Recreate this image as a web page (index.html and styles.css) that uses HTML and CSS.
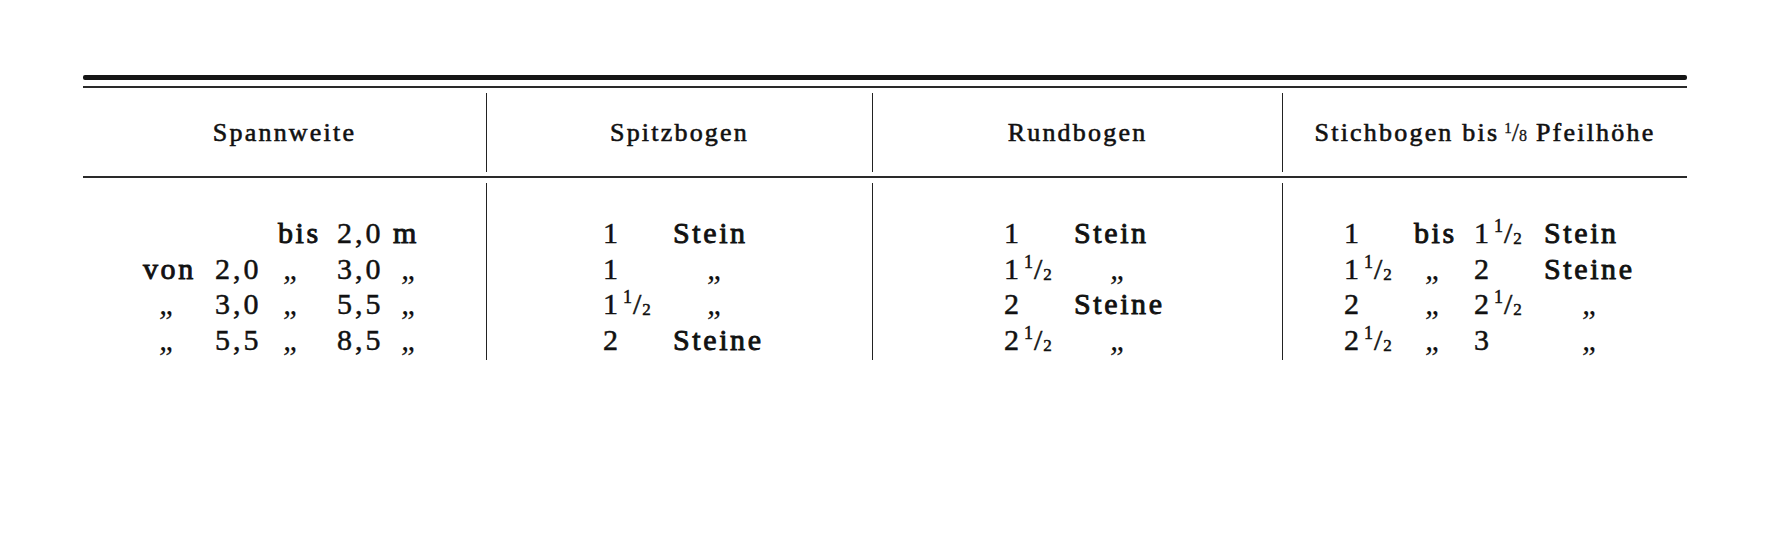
FILE: index.html
```html
<!DOCTYPE html>
<html lang="de">
<head>
<meta charset="utf-8">
<title>Spannweite – Bogenstärken</title>
<link rel="stylesheet" href="styles.css">
</head>
<body>
<div class="page">
  <div class="rule-thick"></div>
  <div class="rule-thin"></div>
  <div class="head">
    <div class="hcell">Spannweite</div>
    <div class="hcell sep">Spitzbogen</div>
    <div class="hcell sep">Rundbogen</div>
    <div class="hcell sep">Stichbogen bis <span class="hfrac"><span class="hsup">1</span>/<span class="hsub">8</span></span> Pfeilhöhe</div>
  </div>
  <div class="rule-mid"></div>
  <div class="body">
    <div class="bcell c1">
      <span></span><span></span><span class="w">bis</span><span>2,0</span><span class="w">m</span>
      <span class="w">von</span><span>2,0</span><span><i class="ditto d-c">„</i></span><span>3,0</span><span><i class="ditto d-e">„</i></span>
      <span><i class="ditto d-a">„</i></span><span>3,0</span><span><i class="ditto d-c">„</i></span><span>5,5</span><span><i class="ditto d-e">„</i></span>
      <span><i class="ditto d-a">„</i></span><span>5,5</span><span><i class="ditto d-c">„</i></span><span>8,5</span><span><i class="ditto d-e">„</i></span>
    </div>
    <div class="bcell sep c2">
      <span>1</span><span class="w">Stein</span>
      <span>1</span><span><i class="ditto d-w2">„</i></span>
      <span>1<span class="fr"><sup>1</sup>/<sub>2</sub></span></span><span><i class="ditto d-w2">„</i></span>
      <span>2</span><span class="w">Steine</span>
    </div>
    <div class="bcell sep c3">
      <span>1</span><span class="w">Stein</span>
      <span>1<span class="fr"><sup>1</sup>/<sub>2</sub></span></span><span><i class="ditto d-w3">„</i></span>
      <span>2</span><span class="w">Steine</span>
      <span>2<span class="fr"><sup>1</sup>/<sub>2</sub></span></span><span><i class="ditto d-w3">„</i></span>
    </div>
    <div class="bcell sep c4">
      <span>1</span><span class="w">bis</span><span>1<span class="fr"><sup>1</sup>/<sub>2</sub></span></span><span class="w">Stein</span>
      <span>1<span class="fr"><sup>1</sup>/<sub>2</sub></span></span><span><i class="ditto d-b">„</i></span><span>2</span><span class="w">Steine</span>
      <span>2</span><span><i class="ditto d-b">„</i></span><span>2<span class="fr"><sup>1</sup>/<sub>2</sub></span></span><span><i class="ditto d-w4">„</i></span>
      <span>2<span class="fr"><sup>1</sup>/<sub>2</sub></span></span><span><i class="ditto d-b">„</i></span><span>3</span><span><i class="ditto d-w4">„</i></span>
    </div>
  </div>
</div>
</body>
</html>
```
FILE: styles.css
```css
html, body {
  margin: 0;
  padding: 0;
  background: #ffffff;
}

body {
  font-family: "Liberation Serif", "DejaVu Serif", serif;
  color: #111111;
}

.page {
  width: 1604px;
  padding: 75px 0 0 83px;
}

.rule-thick {
  height: 5px;
  background: #151515;
  border-radius: 2px;
}

.rule-thin {
  height: 2px;
  margin-top: 6px;
  background: #2a2a2a;
}

.head {
  display: grid;
  grid-template-columns: 403px 386px 410px 405px;
  height: 79px;
  padding: 5px 0 4px;
}

.hcell {
  display: flex;
  align-items: center;
  justify-content: center;
  font-size: 26px;
  letter-spacing: 2.2px;
  padding-top: 1px;
  -webkit-text-stroke: 0.6px #111111;
}

.sep {
  border-left: 1px solid #222222;
}

.hfrac {
  font-size: 26px;
  letter-spacing: 0;
  margin: 0 9px 0 5px;
  -webkit-text-stroke: 0.3px #111111;
}

.hsup {
  font-size: 15px;
  vertical-align: 8px;
  line-height: 0;
}

.hsub {
  font-size: 16px;
  line-height: 0;
}

.rule-mid {
  height: 2px;
  background: #2a2a2a;
}

.body {
  display: grid;
  grid-template-columns: 403px 386px 410px 405px;
  margin-top: 5px;
}

.bcell {
  display: grid;
  grid-auto-rows: 35.5px;
  align-content: start;
  height: 145px;
  padding-top: 32px;
  font-size: 30px;
  line-height: 35.5px;
  letter-spacing: 3px;
  white-space: nowrap;
  -webkit-text-stroke: 0.5px #111111;
}

.c1 {
  grid-template-columns: 72px 63px 59px 56px auto;
  padding-left: 60px;
}

.c2 {
  grid-template-columns: 70px auto;
  padding-left: 116px;
}

.c3 {
  grid-template-columns: 70px auto;
  padding-left: 131px;
}

.c4 {
  grid-template-columns: 70px 60px 70px auto;
  padding-left: 61px;
}

.w {
  letter-spacing: 2.6px;
  -webkit-text-stroke: 0.9px #111111;
}

.fr {
  letter-spacing: 0;
  margin-left: 2px;
}

.fr sup {
  font-size: 18px;
  line-height: 0;
  vertical-align: 11px;
  margin-right: 1px;
}

.fr sub {
  font-size: 17px;
  line-height: 0;
  vertical-align: -1px;
  margin-left: 1px;
}

.ditto {
  font-style: italic;
  font-size: 31px;
  line-height: 30px;
  letter-spacing: 0;
  -webkit-text-stroke: 0.2px #111111;
}

.d-a { margin-left: 16px; }
.d-c { margin-left: 5px; }
.d-e { margin-left: 8px; }
.d-b { margin-left: 11px; }
.d-w2 { margin-left: 34px; }
.d-w3 { margin-left: 36px; }
.d-w4 { margin-left: 38px; }
```
